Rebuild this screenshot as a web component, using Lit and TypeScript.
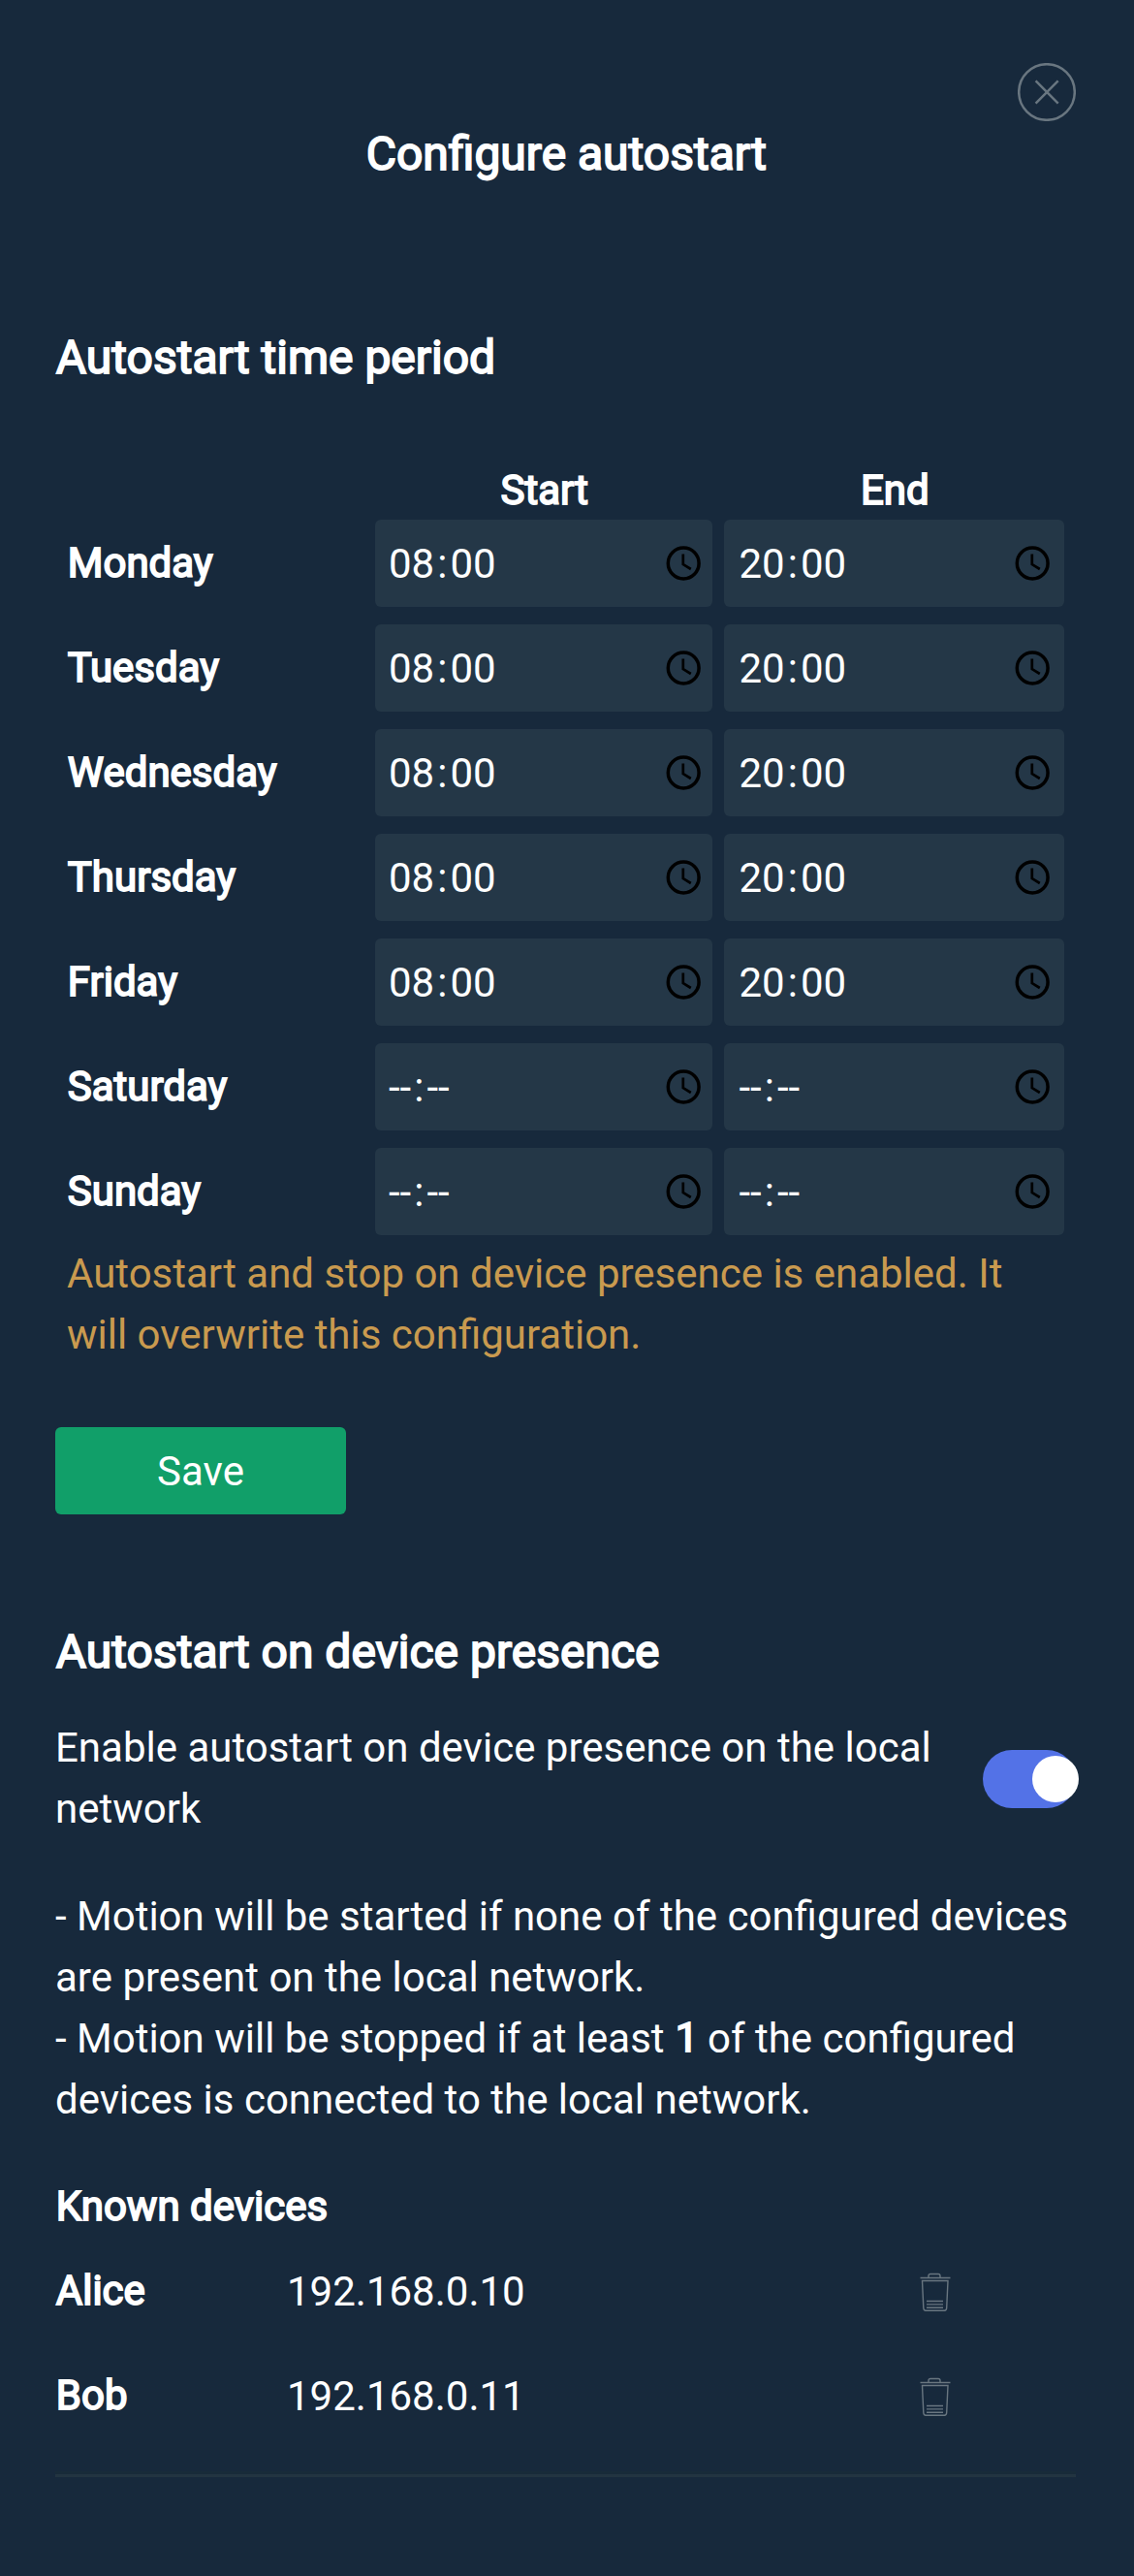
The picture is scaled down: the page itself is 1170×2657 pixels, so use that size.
import { LitElement, html, css, svg } from "lit";
import { customElement, state } from "lit/decorators.js";

interface DaySlot {
  day: string;
  start: string;
  end: string;
}

interface Device {
  name: string;
  ip: string;
}

const closeIcon = svg`
  <circle cx="30" cy="30" r="28.8" />
  <path d="M18.6 18.3 41.7 41.7M41.7 18.3 18.6 41.7" />
`;

const clockIcon = svg`
  <circle cx="18.2" cy="18" r="15.9" stroke-width="3.5" />
  <path d="M17.8 8.5v10.600l8 4.900" stroke-width="2.700" />
`;

const trashIcon = svg`
  <path d="M.5 5.500h31M9 5V3.500Q9 1.500 11 1.500h8Q21 1.500 21 3.500V5M2.500 8.500h26.500l-1.300 28Q27.500 39.300 25.500 39.300h-19.500Q4 39.300 3.800 36.500z" />
  <path d="M7 29.500h17M7 32.900h17M7 36.200h17" />
`;

@customElement("time-field")
class TimeField extends LitElement {
  static properties = { value: {} };
  declare value: string;

  static styles = css`
    :host {
      display: flex;
      align-items: center;
      justify-content: space-between;
      box-sizing: border-box;
      height: 90px;
      padding: 0 12px 0 13px;
      border-radius: 6px;
      background: #243747;
      color: #fff;
    }
    :host(.end) {
      padding: 0 15.500px 0 14.500px;
    }
    .digits {
      display: flex;
      padding-top: 1px;
    }
    .part {
      padding: 0 1px;
    }
    .colon {
      padding: 0 2px;
    }
    .clock {
      width: 36px;
      height: 36px;
      fill: none;
      stroke: #000;
    }
  `;

  render() {
    const [hours, minutes] = (this.value || "--:--").split(":");
    return html`
      <span class="digits"
        ><span class="part">${hours}</span><span class="colon">:</span
        ><span class="part">${minutes}</span></span
      >
      <svg class="clock" viewBox="0 0 36 36">${clockIcon}</svg>
    `;
  }
}

@customElement("app-root")
class AppRoot extends LitElement {
  static styles = css`
    :host {
      display: block;
      box-sizing: border-box;
      height: 2657px;
      padding: 65px 60px 0 57px;
      background: #17293c;
      color: #fff;
      font-family: Roboto, sans-serif;
      font-size: 42px;
      line-height: 63px;
    }
    h1,
    h2,
    h3,
    p {
      margin: 0;
      font-weight: 400;
    }
    h1,
    h2,
    .strong {
      -webkit-text-stroke: 1.8px currentColor;
      transform: translate(0.8px, -0.8px);
    }
    h1,
    h2 {
      font-size: 48px;
      line-height: 72px;
    }
    h3 {
      font-size: 42px;
    }
    .top {
      display: flex;
      justify-content: flex-end;
      height: 59px;
    }
    .close {
      flex: none;
      width: 60px;
      height: 60px;
      fill: none;
      stroke: #697680;
      stroke-width: 2.5;
    }
    .title {
      text-align: center;
    }
    .period {
      margin-top: 138px;
    }
    .schedule {
      display: grid;
      grid-template-columns: 306px 348px 351px;
      column-gap: 12px;
      row-gap: 18px;
      align-items: center;
      margin: 69px 0 0 12px;
    }
    .head {
      text-align: center;
      margin-bottom: -20px;
    }
    .day {
      padding-top: 1px;
    }
    .warning {
      margin: 8px 0 0 12px;
      color: #c99a4f;
    }
    .save {
      display: block;
      width: 300px;
      height: 90px;
      margin-top: 64px;
      padding: 0;
      border: 0;
      border-radius: 6px;
      background: #119f69;
      color: #fff;
      font: inherit;
    }
    .presence {
      margin-top: 107px;
    }
    .enable {
      display: flex;
      align-items: center;
      justify-content: space-between;
      margin-top: 30px;
    }
    .enable-text {
      width: 920px;
    }
    .toggle {
      display: flex;
      align-items: center;
      justify-content: flex-end;
      width: 96px;
      height: 60px;
      margin-top: 2px;
      border-radius: 30px;
      background: #5372e7;
    }
    .knob {
      width: 48px;
      height: 48px;
      margin-right: -3px;
      border-radius: 50%;
      background: #fff;
    }
    .rules {
      margin-top: 48px;
      margin-right: -6px;
    }
    .count {
      display: inline-block;
    }
    .known {
      margin-top: 48px;
    }
    .devices {
      display: grid;
      row-gap: 18px;
      margin-top: 11px;
    }
    .device {
      display: grid;
      grid-template-columns: 239px 653px auto;
      align-items: center;
      justify-content: start;
      height: 90px;
    }
    .label {
      padding-bottom: 1px;
    }
    .trash {
      width: 32px;
      height: 40px;
      fill: none;
      stroke: #697680;
      stroke-width: 1.4;
    }
    .divider {
      height: 3px;
      margin-top: 32px;
      border-top: 3px solid #182b39;
      background: #223441;
    }
  `;

  @state() private slots: DaySlot[] = [
    { day: "Monday", start: "08:00", end: "20:00" },
    { day: "Tuesday", start: "08:00", end: "20:00" },
    { day: "Wednesday", start: "08:00", end: "20:00" },
    { day: "Thursday", start: "08:00", end: "20:00" },
    { day: "Friday", start: "08:00", end: "20:00" },
    { day: "Saturday", start: "", end: "" },
    { day: "Sunday", start: "", end: "" },
  ];

  @state() private devices: Device[] = [
    { name: "Alice", ip: "192.168.0.10" },
    { name: "Bob", ip: "192.168.0.11" },
  ];

  render() {
    return html`
      <header>
        <div class="top">
          <svg class="close" viewBox="0 0 60 60">${closeIcon}</svg>
        </div>
        <h1 class="title">Configure autostart</h1>
      </header>

      <section>
        <h2 class="period">Autostart time period</h2>
        <div class="schedule">
          <span></span>
          <span class="head strong">Start</span>
          <span class="head strong">End</span>
          ${this.slots.map(
            (s) => html`
              <span class="day strong">${s.day}</span>
              <time-field .value=${s.start}></time-field>
              <time-field class="end" .value=${s.end}></time-field>
            `
          )}
        </div>
        <p class="warning">
          Autostart and stop on device presence is enabled. It<br />will
          overwrite this configuration.
        </p>
        <button class="save">Save</button>
      </section>

      <section>
        <h2 class="presence">Autostart on device presence</h2>
        <div class="enable">
          <span class="enable-text"
            >Enable autostart on device presence on the local network</span
          >
          <span class="toggle"><span class="knob"></span></span>
        </div>
        <p class="rules">
          - Motion will be started if none of the configured devices<br />are
          present on the local network.<br />- Motion will be stopped if at
          least <span class="count strong">1</span> of the configured<br />devices
          is connected to the local network.
        </p>
        <h3 class="known strong">Known devices</h3>
        <div class="devices">
          ${this.devices.map(
            (d) => html`
              <div class="device">
                <span class="label strong">${d.name}</span>
                <span class="label">${d.ip}</span>
                <svg class="trash" viewBox="0 0 32 40">${trashIcon}</svg>
              </div>
            `
          )}
        </div>
        <div class="divider"></div>
      </section>
    `;
  }
}
